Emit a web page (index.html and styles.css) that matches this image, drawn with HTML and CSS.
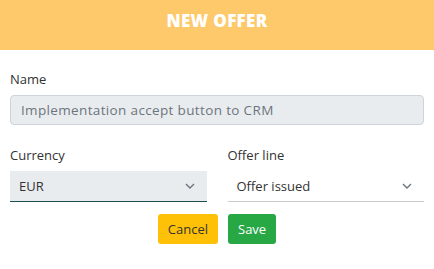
FILE: index.html
```html
<!DOCTYPE html>
<html lang="en">
<head>
    <meta charset="UTF-8">
    <meta name="viewport" content="width=device-width, initial-scale=1.0">
    <title>New Offer</title>
    <link rel="stylesheet" href="styles.css">
</head>
<body>
    <div class="header">
        <h1>NEW OFFER</h1>
    </div>

    <div class="form">
        <div class="field">
            <label>Name</label>
            <div class="input readonly">Implementation accept button to CRM</div>
        </div>

        <div class="row">
            <div class="field">
                <label>Currency</label>
                <div class="select active">
                    <span>EUR</span>
                    <svg class="chevron" width="10" height="6" viewBox="0 0 10 6"><path d="M1 1l4 4 4-4" fill="none" stroke="#6c757d" stroke-width="1.4"/></svg>
                </div>
            </div>
            <div class="field">
                <label>Offer line</label>
                <div class="select">
                    <span>Offer issued</span>
                    <svg class="chevron" width="10" height="6" viewBox="0 0 10 6"><path d="M1 1l4 4 4-4" fill="none" stroke="#6c757d" stroke-width="1.4"/></svg>
                </div>
            </div>
        </div>

        <div class="actions">
            <button class="btn btn-cancel">Cancel</button>
            <button class="btn btn-save">Save</button>
        </div>
    </div>
</body>
</html>
```

FILE: styles.css
```css
body {
    margin: 0;
    font-family: "Open Sans", Arial, sans-serif;
    color: #333;
    background: white;
}

.header {
    background: #fec96a;
    height: 50px;
    display: flex;
    align-items: center;
    justify-content: center;
}

.header h1 {
    margin: 0;
    color: white;
    font-size: 17px;
    font-weight: 800;
    letter-spacing: 0.3px;
    margin-top: -9px;
}

.form {
    padding: 20px 10px 0 10px;
}

.field label {
    display: block;
    font-size: 13px;
    color: #333;
    margin-bottom: 7px;
}

.input {
    height: 30px;
    box-sizing: border-box;
    padding: 0 10px;
    display: flex;
    align-items: center;
    font-size: 13.5px;
    letter-spacing: 0.35px;
    color: #6c757d;
    border: 1px solid #ced4da;
    border-radius: 4px;
}

.readonly {
    background: #e9ecef;
}

.row {
    display: grid;
    grid-template-columns: 1fr 1fr;
    gap: 21px;
    margin-top: 21px;
}

.select {
    height: 31px;
    box-sizing: border-box;
    display: flex;
    align-items: center;
    justify-content: space-between;
    padding: 0 12px 0 9px;
    font-size: 13px;
    color: #333;
    border-bottom: 1px solid #ccc;
}

.select.active {
    background: #e9ecef;
    border-bottom: 1px solid #1f4f4f;
}

.actions {
    display: flex;
    justify-content: center;
    gap: 10px;
    margin-top: 12px;
}

.btn {
    font-family: inherit;
    font-size: 13px;
    height: 30px;
    padding: 0 10px;
    border: none;
    border-radius: 3px;
}

.btn-cancel {
    background: #ffc107;
    color: #333;
}

.btn-save {
    background: #28a745;
    color: white;
}
```
